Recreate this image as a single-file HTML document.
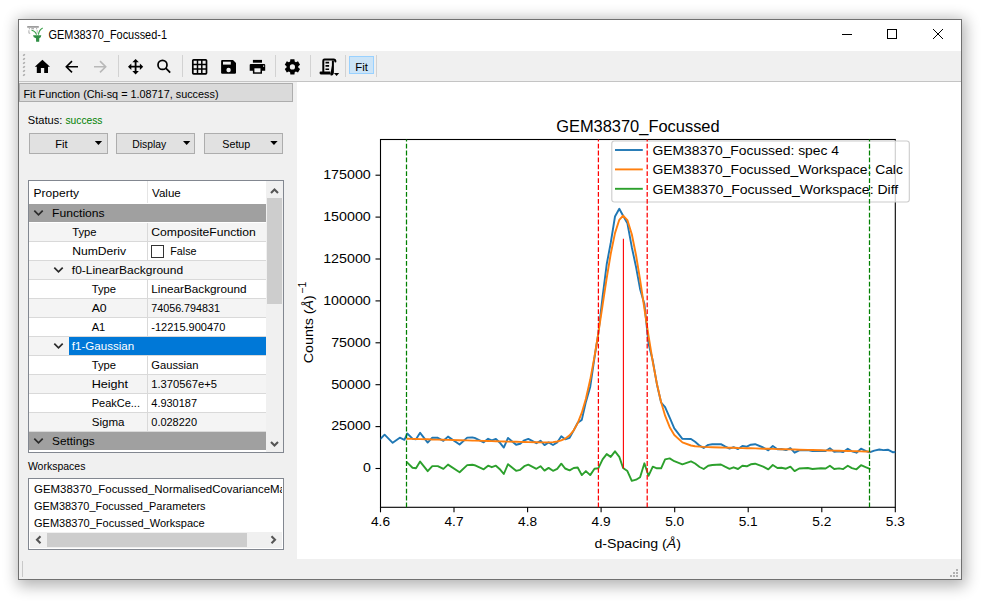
<!DOCTYPE html>
<html><head><meta charset="utf-8"><style>
html,body{margin:0;padding:0;width:986px;height:602px;overflow:hidden;background:#fff}
svg text{font-family:"Liberation Sans", sans-serif}
</style></head><body>
<svg width="986" height="602" viewBox="0 0 986 602" style="position:absolute;left:0;top:0">
<defs><clipPath id="ax"><rect x="380.5" y="139.5" width="514.8" height="367.8"/></clipPath><clipPath id="wl"><rect x="29" y="479" width="253" height="53"/></clipPath><filter id="sh" x="-20%" y="-20%" width="140%" height="140%"><feGaussianBlur stdDeviation="7.5"/></filter></defs>
<rect x="17.5" y="19" width="948" height="567" fill="#000" opacity="0.3" filter="url(#sh)"/>
<rect x="18.5" y="19.5" width="943" height="560" fill="#f0f0f0" stroke="#707070" stroke-width="1"/>
<rect x="19" y="20" width="942" height="31" fill="#fff"/>
<text x="48.5" y="39.2" font-size="12" textLength="118.5" lengthAdjust="spacingAndGlyphs">GEM38370_Focussed-1</text>
<line x1="842" y1="34.5" x2="852" y2="34.5" stroke="#000" stroke-width="1"/>
<rect x="887.5" y="29.5" width="9" height="9" fill="none" stroke="#000" stroke-width="1"/>
<path d="M933 29L943 39M943 29L933 39" stroke="#000" stroke-width="1"/>
<g><path d="M27.2 26.9H38.8" stroke="#8c8c8c" stroke-width="1.5"/><path d="M29.4 28.2V29.2M36.6 28.2V29.2M31.3 28.7H34" stroke="#9c9c9c" stroke-width="1.1" fill="none"/><path d="M28.9 30.2V32.6Q29.2 33.6 30.2 33" stroke="#b4b4b4" stroke-width="1.1" fill="none"/><path d="M37.2 30V33.5" stroke="#c0c0c0" stroke-width="1" fill="none"/><path d="M31.5 30.3Q35 30.8 36.6 34.6M42.7 28Q39 30 38.4 34.6" stroke="#3aa04a" stroke-width="1.1" fill="none"/><path d="M33 35.3H41.3Q41.2 37.6 39.3 38.2L39.2 41.8H36.1L36 38.2Q33.1 37.6 33 35.3Z" fill="#2f8f45"/></g>
<rect x="19" y="51" width="942" height="30" fill="#f0f0f0"/>
<line x1="19" y1="81.5" x2="961" y2="81.5" stroke="#c4c4c4" stroke-width="1"/>
<path d="M23.2 55.8L24.8 54.2" stroke="#a8a8a8" stroke-width="1.6"/>
<path d="M23.2 59.8L24.8 58.2" stroke="#a8a8a8" stroke-width="1.6"/>
<path d="M23.2 63.8L24.8 62.2" stroke="#a8a8a8" stroke-width="1.6"/>
<path d="M23.2 67.8L24.8 66.2" stroke="#a8a8a8" stroke-width="1.6"/>
<path d="M23.2 71.8L24.8 70.2" stroke="#a8a8a8" stroke-width="1.6"/>
<path d="M23.2 75.8L24.8 74.2" stroke="#a8a8a8" stroke-width="1.6"/>
<line x1="118.5" y1="55" x2="118.5" y2="77" stroke="#d2d2d2" stroke-width="1"/>
<line x1="182.5" y1="55" x2="182.5" y2="77" stroke="#d2d2d2" stroke-width="1"/>
<line x1="275.5" y1="55" x2="275.5" y2="77" stroke="#d2d2d2" stroke-width="1"/>
<line x1="310.5" y1="55" x2="310.5" y2="77" stroke="#d2d2d2" stroke-width="1"/>
<line x1="345.5" y1="55" x2="345.5" y2="77" stroke="#d2d2d2" stroke-width="1"/>
<line x1="376.5" y1="55" x2="376.5" y2="77" stroke="#d2d2d2" stroke-width="1"/>
<path d="M42.4 59.8L34.8 66.8H36.8V73H40.9V68H44.2V73H48V66.8H50Z" fill="#000"/>
<path d="M78 66.7H66.5M72 61.1L66.3 66.7L72 72.4" stroke="#000" stroke-width="1.6" fill="none"/>
<path d="M94 66.7H105.5M100 61.1L105.7 66.7L100 72.4" stroke="#b8b8b8" stroke-width="1.6" fill="none"/>
<g fill="#000"><path d="M135.6 59L132.3 62.3H138.9Z"/><path d="M135.6 74.4L132.3 71.1H138.9Z"/><path d="M128 66.7L131.3 63.4V70Z"/><path d="M143.2 66.7L139.9 63.4V70Z"/></g><path d="M135.6 61.5V72M130.5 66.7H141" stroke="#000" stroke-width="1.8"/>
<circle cx="162.5" cy="64.9" r="4.5" fill="none" stroke="#000" stroke-width="1.7"/><path d="M165.8 68.2L170.2 72.6" stroke="#000" stroke-width="1.8"/>
<rect x="192.8" y="59.8" width="13.7" height="14" rx="0.8" fill="none" stroke="#000" stroke-width="1.7"/><path d="M197.5 60V73.5M201.8 60V73.5M193 64.5H206M193 69H206" stroke="#000" stroke-width="1.5"/>
<path d="M222.2 59.9H233L236 62.9V72.6Q236 73.8 234.8 73.8H222.3Q221.1 73.8 221.1 72.6V61.1Q221.1 59.9 222.2 59.9Z" fill="#000"/><rect x="223" y="61.7" width="7.8" height="2.9" fill="#f0f0f0"/><circle cx="228.6" cy="70" r="2.2" fill="#f0f0f0"/>
<rect x="252.9" y="59.9" width="9.1" height="2.8" fill="#000"/><path d="M250.8 63.9H264.1Q265.2 63.9 265.2 65V70.8H262V73.8H252.9V70.8H249.7V65Q249.7 63.9 250.8 63.9Z" fill="#000"/><rect x="254.4" y="68.3" width="6.1" height="4" fill="#f0f0f0"/><rect x="263" y="65.5" width="1.2" height="1.2" fill="#f0f0f0"/>
<polygon points="290.36,59.27 294.44,59.27 294.71,61.47 295.95,62.19 297.99,61.31 300.03,64.86 298.26,66.18 298.26,67.62 300.03,68.94 297.99,72.49 295.95,71.61 294.71,72.33 294.44,74.53 290.36,74.53 290.09,72.33 288.85,71.61 286.81,72.49 284.77,68.94 286.54,67.62 286.54,66.18 284.77,64.86 286.81,61.31 288.85,62.19 290.09,61.47" fill="#000"/><circle cx="292.4" cy="66.9" r="2.6" fill="#f0f0f0"/>
<path d="M323.3 72V60.8Q323.3 59.6 324.5 59.6H333.6Q335.4 59.6 335.4 61.6" stroke="#000" stroke-width="2" fill="none" stroke-linecap="round"/><path d="M332.9 60.5V72.2Q332.9 74.6 330.6 74.6H321.4Q319.6 74.6 319.6 73.2V72.6Q319.6 71.6 320.6 71.6H330.3V74.6" stroke="none" fill="#000"/><path d="M332.9 60.5V72.2Q332.9 74.6 330.6 74.6" stroke="#000" stroke-width="2" fill="none"/><path d="M325.5 62.6H329.1M325.5 65.9H329.1M325.5 69.2H329.1" stroke="#000" stroke-width="1.6"/><path d="M333.9 73.1H339.2L336.55 76.1Z" fill="#000"/>
<rect x="349.5" y="56.5" width="24" height="17" fill="#cce4f7" stroke="#99d1ff" stroke-width="1"/>
<text x="355.3" y="70.8" font-size="11.5" textLength="12.7" lengthAdjust="spacingAndGlyphs">Fit</text>
<rect x="19" y="82" width="278" height="477" fill="#f0f0f0"/>
<rect x="19.5" y="83.5" width="273" height="18" fill="#dadada" stroke="#adadad" stroke-width="1"/>
<text x="23.5" y="97.8" font-size="11.5" textLength="195" lengthAdjust="spacingAndGlyphs">Fit Function (Chi-sq = 1.08717, success)</text>
<text x="27.8" y="124" font-size="11.5" textLength="34.5" lengthAdjust="spacingAndGlyphs">Status:</text>
<text x="65.5" y="124" font-size="11.5" textLength="37" lengthAdjust="spacingAndGlyphs" fill="#008000">success</text>
<rect x="29.5" y="133.5" width="78" height="20" fill="#e1e1e1" stroke="#adadad" stroke-width="1"/>
<text x="55.3" y="147.6" font-size="11.5" textLength="12.4" lengthAdjust="spacingAndGlyphs">Fit</text>
<path d="M94.8 141H102.1L98.45 145Z" fill="#000"/>
<rect x="116.5" y="133.5" width="78" height="20" fill="#e1e1e1" stroke="#adadad" stroke-width="1"/>
<text x="132.3" y="147.6" font-size="11.5" textLength="34" lengthAdjust="spacingAndGlyphs">Display</text>
<path d="M183 141H190.3L186.65 145Z" fill="#000"/>
<rect x="204.5" y="133.5" width="78" height="20" fill="#e1e1e1" stroke="#adadad" stroke-width="1"/>
<text x="222.3" y="147.6" font-size="11.5" textLength="28" lengthAdjust="spacingAndGlyphs">Setup</text>
<path d="M270.3 141H277.6L273.95 145Z" fill="#000"/>
<rect x="28.5" y="180.5" width="255" height="272" fill="#fff" stroke="#828790" stroke-width="1"/>
<line x1="147.5" y1="181" x2="147.5" y2="203" stroke="#e5e5e5" stroke-width="1"/>
<text x="33.6" y="197" font-size="11.5" textLength="45.4" lengthAdjust="spacingAndGlyphs">Property</text>
<text x="152.1" y="197" font-size="11.5" textLength="28.7" lengthAdjust="spacingAndGlyphs">Value</text>
<rect x="29" y="204" width="237" height="18" fill="#a0a0a0"/>
<path d="M34.3 210.6L38.5 214.8L42.7 210.6" stroke="#2b2b2b" stroke-width="1.7" fill="none"/>
<text x="52.1" y="216.9" font-size="11.5" textLength="52.5" lengthAdjust="spacingAndGlyphs">Functions</text>
<rect x="29" y="223" width="237" height="18" fill="#f4f4f4"/>
<line x1="29" y1="241.5" x2="266" y2="241.5" stroke="#d9d9d9" stroke-width="1"/>
<line x1="147.5" y1="223" x2="147.5" y2="241" stroke="#d9d9d9" stroke-width="1"/>
<text x="72.2" y="235.9" font-size="11.5" textLength="24.3" lengthAdjust="spacingAndGlyphs">Type</text>
<text x="151.3" y="235.9" font-size="11.5" textLength="104.5" lengthAdjust="spacingAndGlyphs">CompositeFunction</text>
<rect x="29" y="242" width="237" height="18" fill="#ffffff"/>
<line x1="29" y1="260.5" x2="266" y2="260.5" stroke="#d9d9d9" stroke-width="1"/>
<line x1="147.5" y1="242" x2="147.5" y2="260" stroke="#d9d9d9" stroke-width="1"/>
<text x="72.2" y="254.9" font-size="11.5" textLength="53.9" lengthAdjust="spacingAndGlyphs">NumDeriv</text>
<rect x="151.5" y="245.5" width="12" height="12" fill="#fff" stroke="#333333" stroke-width="1"/>
<text x="170.3" y="254.9" font-size="11.5" textLength="26.3" lengthAdjust="spacingAndGlyphs">False</text>
<rect x="29" y="261" width="237" height="18" fill="#f4f4f4"/>
<line x1="29" y1="279.5" x2="266" y2="279.5" stroke="#d9d9d9" stroke-width="1"/>
<path d="M54.3 267.6L58.5 271.8L62.7 267.6" stroke="#2b2b2b" stroke-width="1.7" fill="none"/>
<text x="71.8" y="273.9" font-size="11.5" textLength="111.3" lengthAdjust="spacingAndGlyphs">f0-LinearBackground</text>
<rect x="29" y="280" width="237" height="18" fill="#ffffff"/>
<line x1="29" y1="298.5" x2="266" y2="298.5" stroke="#d9d9d9" stroke-width="1"/>
<line x1="147.5" y1="280" x2="147.5" y2="298" stroke="#d9d9d9" stroke-width="1"/>
<text x="91.7" y="292.9" font-size="11.5" textLength="24.3" lengthAdjust="spacingAndGlyphs">Type</text>
<text x="151.3" y="292.9" font-size="11.5" textLength="95.3" lengthAdjust="spacingAndGlyphs">LinearBackground</text>
<rect x="29" y="299" width="237" height="18" fill="#f4f4f4"/>
<line x1="29" y1="317.5" x2="266" y2="317.5" stroke="#d9d9d9" stroke-width="1"/>
<line x1="147.5" y1="299" x2="147.5" y2="317" stroke="#d9d9d9" stroke-width="1"/>
<text x="91.7" y="311.9" font-size="11.5" textLength="15" lengthAdjust="spacingAndGlyphs">A0</text>
<text x="151.3" y="311.9" font-size="11.5" textLength="68.6" lengthAdjust="spacingAndGlyphs">74056.794831</text>
<rect x="29" y="318" width="237" height="18" fill="#ffffff"/>
<line x1="29" y1="336.5" x2="266" y2="336.5" stroke="#d9d9d9" stroke-width="1"/>
<line x1="147.5" y1="318" x2="147.5" y2="336" stroke="#d9d9d9" stroke-width="1"/>
<text x="91.7" y="330.9" font-size="11.5" textLength="13.6" lengthAdjust="spacingAndGlyphs">A1</text>
<text x="151.3" y="330.9" font-size="11.5" textLength="74" lengthAdjust="spacingAndGlyphs">-12215.900470</text>
<rect x="29" y="337" width="237" height="18" fill="#f4f4f4"/>
<line x1="29" y1="355.5" x2="266" y2="355.5" stroke="#d9d9d9" stroke-width="1"/>
<path d="M54.3 343.6L58.5 347.8L62.7 343.6" stroke="#2b2b2b" stroke-width="1.7" fill="none"/>
<rect x="69" y="337" width="197" height="18" fill="#0078d7"/>
<text x="71.8" y="349.9" font-size="11.5" textLength="62.4" lengthAdjust="spacingAndGlyphs" fill="#fff">f1-Gaussian</text>
<rect x="29" y="356" width="237" height="18" fill="#ffffff"/>
<line x1="29" y1="374.5" x2="266" y2="374.5" stroke="#d9d9d9" stroke-width="1"/>
<line x1="147.5" y1="356" x2="147.5" y2="374" stroke="#d9d9d9" stroke-width="1"/>
<text x="91.7" y="368.9" font-size="11.5" textLength="24.3" lengthAdjust="spacingAndGlyphs">Type</text>
<text x="151.3" y="368.9" font-size="11.5" textLength="47.2" lengthAdjust="spacingAndGlyphs">Gaussian</text>
<rect x="29" y="375" width="237" height="18" fill="#f4f4f4"/>
<line x1="29" y1="393.5" x2="266" y2="393.5" stroke="#d9d9d9" stroke-width="1"/>
<line x1="147.5" y1="375" x2="147.5" y2="393" stroke="#d9d9d9" stroke-width="1"/>
<text x="91.7" y="387.9" font-size="11.5" textLength="36.4" lengthAdjust="spacingAndGlyphs">Height</text>
<text x="151.3" y="387.9" font-size="11.5" textLength="65.6" lengthAdjust="spacingAndGlyphs">1.370567e+5</text>
<rect x="29" y="394" width="237" height="18" fill="#ffffff"/>
<line x1="29" y1="412.5" x2="266" y2="412.5" stroke="#d9d9d9" stroke-width="1"/>
<line x1="147.5" y1="394" x2="147.5" y2="412" stroke="#d9d9d9" stroke-width="1"/>
<text x="91.7" y="406.9" font-size="11.5" textLength="48.3" lengthAdjust="spacingAndGlyphs">PeakCe...</text>
<text x="151.3" y="406.9" font-size="11.5" textLength="45.7" lengthAdjust="spacingAndGlyphs">4.930187</text>
<rect x="29" y="413" width="237" height="18" fill="#f4f4f4"/>
<line x1="29" y1="431.5" x2="266" y2="431.5" stroke="#d9d9d9" stroke-width="1"/>
<line x1="147.5" y1="413" x2="147.5" y2="431" stroke="#d9d9d9" stroke-width="1"/>
<text x="91.7" y="425.9" font-size="11.5" textLength="32.8" lengthAdjust="spacingAndGlyphs">Sigma</text>
<text x="151.3" y="425.9" font-size="11.5" textLength="45.7" lengthAdjust="spacingAndGlyphs">0.028220</text>
<rect x="29" y="432" width="237" height="18" fill="#a0a0a0"/>
<path d="M34.3 438.6L38.5 442.8L42.7 438.6" stroke="#2b2b2b" stroke-width="1.7" fill="none"/>
<text x="52.1" y="444.9" font-size="11.5" textLength="42.6" lengthAdjust="spacingAndGlyphs">Settings</text>
<rect x="266" y="181" width="17" height="271" fill="#f0f0f0"/>
<rect x="267" y="198" width="15" height="106" fill="#cdcdcd"/>
<path d="M271 193L274.5 189.5L278 193" stroke="#555" stroke-width="2.1" fill="none"/>
<path d="M271 442L274.5 445.5L278 442" stroke="#555" stroke-width="2.1" fill="none"/>
<text x="27.9" y="470" font-size="11.5" textLength="57.5" lengthAdjust="spacingAndGlyphs">Workspaces</text>
<rect x="28.5" y="478.5" width="255" height="71" fill="#fff" stroke="#828790" stroke-width="1"/>
<g clip-path="url(#wl)">
<text x="34" y="492.5" font-size="11.5" textLength="267.2" lengthAdjust="spacingAndGlyphs">GEM38370_Focussed_NormalisedCovarianceMatrix</text>
<text x="34" y="509.9" font-size="11.5" textLength="171.6" lengthAdjust="spacingAndGlyphs">GEM38370_Focussed_Parameters</text>
<text x="34" y="526.9" font-size="11.5" textLength="170.7" lengthAdjust="spacingAndGlyphs">GEM38370_Focussed_Workspace</text>
</g>
<rect x="30" y="532" width="252" height="16" fill="#f0f0f0"/>
<rect x="47" y="533" width="200" height="14" fill="#cdcdcd"/>
<path d="M40.5 536.2L37 539.7L40.5 543.2" stroke="#555" stroke-width="2.1" fill="none"/>
<path d="M271.5 536.2L275 539.7L271.5 543.2" stroke="#555" stroke-width="2.1" fill="none"/>
<line x1="22.5" y1="561" x2="22.5" y2="577" stroke="#c8c8c8" stroke-width="1"/>
<rect x="956" y="569" width="2" height="2" fill="#b0b0b0"/>
<rect x="953" y="572" width="2" height="2" fill="#b0b0b0"/>
<rect x="956" y="572" width="2" height="2" fill="#b0b0b0"/>
<rect x="950" y="575" width="2" height="2" fill="#b0b0b0"/>
<rect x="953" y="575" width="2" height="2" fill="#b0b0b0"/>
<rect x="956" y="575" width="2" height="2" fill="#b0b0b0"/>
<rect x="297" y="82" width="664" height="477" fill="#fff"/>
<rect x="380.5" y="139.5" width="514.8" height="367.8" fill="#fff" stroke="#000" stroke-width="1.1"/>
<line x1="375.5" y1="468.5" x2="380.5" y2="468.5" stroke="#000" stroke-width="1.1"/>
<text x="370.8" y="472.3" font-size="13.3" text-anchor="end" textLength="7.9" lengthAdjust="spacingAndGlyphs">0</text>
<line x1="375.5" y1="426.6" x2="380.5" y2="426.6" stroke="#000" stroke-width="1.1"/>
<text x="370.8" y="430.4" font-size="13.3" text-anchor="end" textLength="39.6" lengthAdjust="spacingAndGlyphs">25000</text>
<line x1="375.5" y1="384.7" x2="380.5" y2="384.7" stroke="#000" stroke-width="1.1"/>
<text x="370.8" y="388.5" font-size="13.3" text-anchor="end" textLength="39.6" lengthAdjust="spacingAndGlyphs">50000</text>
<line x1="375.5" y1="342.8" x2="380.5" y2="342.8" stroke="#000" stroke-width="1.1"/>
<text x="370.8" y="346.6" font-size="13.3" text-anchor="end" textLength="39.6" lengthAdjust="spacingAndGlyphs">75000</text>
<line x1="375.5" y1="300.9" x2="380.5" y2="300.9" stroke="#000" stroke-width="1.1"/>
<text x="370.8" y="304.7" font-size="13.3" text-anchor="end" textLength="47.6" lengthAdjust="spacingAndGlyphs">100000</text>
<line x1="375.5" y1="259.0" x2="380.5" y2="259.0" stroke="#000" stroke-width="1.1"/>
<text x="370.8" y="262.8" font-size="13.3" text-anchor="end" textLength="47.6" lengthAdjust="spacingAndGlyphs">125000</text>
<line x1="375.5" y1="217.1" x2="380.5" y2="217.1" stroke="#000" stroke-width="1.1"/>
<text x="370.8" y="220.9" font-size="13.3" text-anchor="end" textLength="47.6" lengthAdjust="spacingAndGlyphs">150000</text>
<line x1="375.5" y1="175.2" x2="380.5" y2="175.2" stroke="#000" stroke-width="1.1"/>
<text x="370.8" y="179.0" font-size="13.3" text-anchor="end" textLength="47.6" lengthAdjust="spacingAndGlyphs">175000</text>
<line x1="380.5" y1="507.3" x2="380.5" y2="512.3" stroke="#000" stroke-width="1.1"/>
<text x="380.5" y="526.3" font-size="13.3" text-anchor="middle" textLength="19" lengthAdjust="spacingAndGlyphs">4.6</text>
<line x1="454.0" y1="507.3" x2="454.0" y2="512.3" stroke="#000" stroke-width="1.1"/>
<text x="454.0" y="526.3" font-size="13.3" text-anchor="middle" textLength="19" lengthAdjust="spacingAndGlyphs">4.7</text>
<line x1="527.6" y1="507.3" x2="527.6" y2="512.3" stroke="#000" stroke-width="1.1"/>
<text x="527.6" y="526.3" font-size="13.3" text-anchor="middle" textLength="19" lengthAdjust="spacingAndGlyphs">4.8</text>
<line x1="601.1" y1="507.3" x2="601.1" y2="512.3" stroke="#000" stroke-width="1.1"/>
<text x="601.1" y="526.3" font-size="13.3" text-anchor="middle" textLength="19" lengthAdjust="spacingAndGlyphs">4.9</text>
<line x1="674.7" y1="507.3" x2="674.7" y2="512.3" stroke="#000" stroke-width="1.1"/>
<text x="674.7" y="526.3" font-size="13.3" text-anchor="middle" textLength="19" lengthAdjust="spacingAndGlyphs">5.0</text>
<line x1="748.2" y1="507.3" x2="748.2" y2="512.3" stroke="#000" stroke-width="1.1"/>
<text x="748.2" y="526.3" font-size="13.3" text-anchor="middle" textLength="19" lengthAdjust="spacingAndGlyphs">5.1</text>
<line x1="821.8" y1="507.3" x2="821.8" y2="512.3" stroke="#000" stroke-width="1.1"/>
<text x="821.8" y="526.3" font-size="13.3" text-anchor="middle" textLength="19" lengthAdjust="spacingAndGlyphs">5.2</text>
<line x1="895.3" y1="507.3" x2="895.3" y2="512.3" stroke="#000" stroke-width="1.1"/>
<text x="895.3" y="526.3" font-size="13.3" text-anchor="middle" textLength="19" lengthAdjust="spacingAndGlyphs">5.3</text>
<text x="637.9" y="131.9" font-size="16" text-anchor="middle" textLength="163.5" lengthAdjust="spacingAndGlyphs">GEM38370_Focussed</text>
<text x="594.4" y="548" font-size="13.3" textLength="86.6" lengthAdjust="spacingAndGlyphs">d-Spacing (<tspan font-style="italic">Å</tspan>)</text>
<g transform="translate(313.3,363.2) rotate(-90)"><text x="0" y="0" font-size="13.3" textLength="68" lengthAdjust="spacingAndGlyphs">Counts (<tspan font-style="italic">Å</tspan>)</text><text x="69.5" y="-7" font-size="10.5">−1</text></g>
<g clip-path="url(#ax)" fill="none" stroke-linejoin="round" stroke-linecap="square">
<polyline points="380.5,438.8 384.6,434.7 392.7,442.8 399.8,437.7 404.4,439.8 407.3,433.5 412.5,438.7 416.0,439.3 420.1,432.8 427.7,442.6 432.3,437.7 437.8,437.8 443.4,440.8 448.0,436.6 459.6,444.5 467.2,437.6 472.3,437.5 474.6,437.9 483.7,442.3 488.1,438.8 491.8,440.4 495.9,439.0 500.4,443.3 503.8,447.6 508.0,437.9 516.1,444.7 520.2,443.8 524.3,440.3 528.3,438.9 536.4,443.2 540.5,440.7 544.5,445.1 548.6,442.4 553.0,445.0 557.2,442.4 561.3,436.2 565.1,439.3 569.6,437.8 573.7,430.4 577.7,422.7 581.8,419.9 585.9,401.9 590.2,387.0 594.5,357.5 598.3,333.7 602.6,296.5 606.7,264.3 610.7,243.0 615.0,216.5 619.3,208.8 623.1,215.7 627.4,223.3 631.8,247.2 636.1,267.3 640.1,289.2 644.4,303.9 648.5,343.5 652.8,360.8 656.9,384.2 661.1,402.5 665.1,407.2 669.7,417.7 674.3,428.3 682.4,438.8 691.0,439.0 695.1,441.8 699.6,445.7 703.7,448.0 708.2,444.9 712.3,444.3 720.9,444.1 725.0,446.4 729.5,448.6 733.6,447.2 738.0,449.1 742.4,445.9 746.8,446.6 750.8,444.7 755.1,444.2 763.2,447.5 768.3,450.3 772.8,446.0 777.4,449.2 781.4,449.0 786.0,450.1 790.4,448.2 794.6,452.7 799.2,450.3 807.8,450.0 812.4,451.1 821.0,450.7 825.6,451.0 829.9,448.3 834.2,451.7 839.1,451.3 843.2,452.1 847.8,448.8 851.9,451.3 856.5,452.7 861.0,448.7 865.6,450.8 869.5,452.4 874.3,450.6 879.3,449.5 883.4,450.1 887.8,449.7 892.6,452.2 897.0,452.0" stroke="#1f77b4" stroke-width="1.9"/>
<polyline points="407.3,438.8 412.5,438.9 416.0,439.0 420.1,439.1 427.7,439.3 432.3,439.5 437.8,439.6 443.4,439.8 448.0,439.9 459.6,440.2 467.2,440.4 472.3,440.6 474.6,440.6 483.7,440.9 488.1,441.0 491.8,441.1 495.9,441.2 500.4,441.4 503.8,441.5 508.0,441.6 516.1,441.8 520.2,441.9 524.3,442.0 528.3,442.1 536.4,442.3 540.5,442.4 544.5,442.4 548.6,442.4 553.0,442.1 557.2,441.5 561.3,440.4 565.1,438.7 569.6,435.3 573.7,430.3 577.7,423.1 581.8,412.7 585.9,398.7 590.2,379.8 594.5,356.7 598.3,333.3 602.6,305.0 606.7,278.1 610.7,254.0 615.0,233.1 619.3,219.8 623.1,215.6 627.4,220.1 631.8,234.2 636.1,255.5 640.1,279.9 644.4,308.5 648.5,335.6 652.8,362.0 656.9,383.8 661.1,402.1 665.1,415.7 669.7,427.2 674.3,435.0 682.4,442.4 691.0,445.5 695.1,446.2 699.6,446.6 703.7,446.9 708.2,447.1 712.3,447.2 720.9,447.5 725.0,447.6 729.5,447.7 733.6,447.8 738.0,448.0 742.4,448.1 746.8,448.2 750.8,448.3 755.1,448.4 763.2,448.7 768.3,448.8 772.8,448.9 777.4,449.1 781.4,449.2 786.0,449.3 790.4,449.4 794.6,449.5 799.2,449.7 807.8,449.9 812.4,450.0 821.0,450.3 825.6,450.4 829.9,450.5 834.2,450.6 839.1,450.8 843.2,450.9 847.8,451.0 851.9,451.1 856.5,451.3 861.0,451.4 865.6,451.5 869.5,451.6" stroke="#ff7f0e" stroke-width="1.9"/>
<polyline points="407.3,462.6 412.5,467.7 416.0,468.2 420.1,461.6 427.7,471.2 432.3,466.1 437.8,466.1 443.4,468.9 448.0,464.6 459.6,472.2 467.2,465.1 472.3,464.8 474.6,465.2 483.7,469.3 488.1,465.7 491.8,467.2 495.9,465.7 500.4,469.8 503.8,474.0 508.0,464.2 516.1,470.8 520.2,469.8 524.3,466.2 528.3,464.7 536.4,468.8 540.5,466.2 544.5,470.6 548.6,467.9 553.0,470.8 557.2,468.8 561.3,463.7 565.1,468.5 569.6,470.4 573.7,468.0 577.7,467.5 581.8,475.1 585.9,471.1 590.2,475.1 594.5,468.7 598.3,468.3 602.6,459.4 606.7,454.1 610.7,456.9 615.0,451.3 619.3,456.9 623.1,468.0 627.4,471.1 631.8,480.9 636.1,479.7 640.1,477.2 644.4,463.3 648.5,475.8 652.8,466.7 656.9,468.3 661.1,468.3 665.1,459.4 669.7,458.4 674.3,461.2 682.4,464.3 691.0,461.4 695.1,463.5 699.6,467.0 703.7,469.0 708.2,465.7 712.3,465.0 720.9,464.5 725.0,466.7 729.5,468.8 733.6,467.3 738.0,469.0 742.4,465.7 746.8,466.3 750.8,464.3 755.1,463.7 763.2,466.7 768.3,469.4 772.8,465.0 777.4,468.0 781.4,467.7 786.0,468.7 790.4,466.7 794.6,471.1 799.2,468.5 807.8,468.0 812.4,469.0 821.0,468.3 825.6,468.5 829.9,465.7 834.2,469.0 839.1,468.4 843.2,469.1 847.8,465.7 851.9,468.1 856.5,469.3 861.0,465.2 865.6,467.2 869.5,468.7" stroke="#2ca02c" stroke-width="1.9"/>
</g>
<line x1="623.4" y1="468.5" x2="623.4" y2="238.8" stroke="#ff0000" stroke-width="1.1"/>
<rect x="611.8" y="141" width="297.5" height="61" rx="2.5" fill="#fff" fill-opacity="0.8" stroke="#cccccc" stroke-width="1.1"/>
<line x1="615" y1="150.0" x2="642.8" y2="150.0" stroke="#1f77b4" stroke-width="1.9"/>
<text x="652.5" y="154.8" font-size="13.3" textLength="186.5" lengthAdjust="spacingAndGlyphs">GEM38370_Focussed: spec 4</text>
<line x1="615" y1="169.4" x2="642.8" y2="169.4" stroke="#ff7f0e" stroke-width="1.9"/>
<text x="652.5" y="174.2" font-size="13.3" textLength="250.4" lengthAdjust="spacingAndGlyphs">GEM38370_Focussed_Workspace: Calc</text>
<line x1="615" y1="188.8" x2="642.8" y2="188.8" stroke="#2ca02c" stroke-width="1.9"/>
<text x="652.5" y="193.6" font-size="13.3" textLength="245.7" lengthAdjust="spacingAndGlyphs">GEM38370_Focussed_Workspace: Diff</text>
<line x1="406.5" y1="507.3" x2="406.5" y2="139.5" stroke="#008000" stroke-width="1.25" stroke-dasharray="4.8 2.1"/>
<line x1="869.5" y1="507.3" x2="869.5" y2="139.5" stroke="#008000" stroke-width="1.25" stroke-dasharray="4.8 2.1"/>
<line x1="598.4" y1="507.3" x2="598.4" y2="139.5" stroke="#ff0000" stroke-width="1.25" stroke-dasharray="4.8 2.1"/>
<line x1="647.2" y1="507.3" x2="647.2" y2="139.5" stroke="#ff0000" stroke-width="1.25" stroke-dasharray="4.8 2.1"/>
</svg>
</body></html>
